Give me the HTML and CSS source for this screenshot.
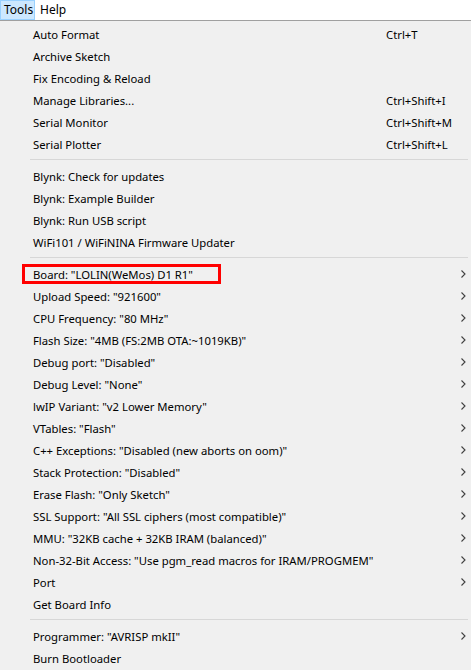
FILE: index.html
```html
<!DOCTYPE html>
<html>
<head>
<meta charset="utf-8">
<link rel="stylesheet" href="styles.css">
</head>
<body>
<div class="menubar">
  <span class="mb-item active">Tools</span>
  <span class="mb-item">Help</span>
</div>
<div class="menu">
  <div class="item"><span class="label">Auto Format</span><span class="key">Ctrl+T</span></div>
  <div class="item"><span class="label">Archive Sketch</span></div>
  <div class="item"><span class="label">Fix Encoding &amp; Reload</span></div>
  <div class="item"><span class="label">Manage Libraries...</span><span class="key">Ctrl+Shift+I</span></div>
  <div class="item"><span class="label">Serial Monitor</span><span class="key">Ctrl+Shift+M</span></div>
  <div class="item"><span class="label">Serial Plotter</span><span class="key">Ctrl+Shift+L</span></div>
  <div class="sep"></div>
  <div class="item"><span class="label">Blynk: Check for updates</span></div>
  <div class="item"><span class="label">Blynk: Example Builder</span></div>
  <div class="item"><span class="label">Blynk: Run USB script</span></div>
  <div class="item"><span class="label">WiFi101 / WiFiNINA Firmware Updater</span></div>
  <div class="sep"></div>
  <div class="item sub highlight"><span class="label">Board: "LOLIN(WeMos) D1 R1"</span><svg class="arrow" width="5" height="8" viewBox="0 0 5 8"><path d="M0.5 0.5 L4 4 L0.5 7.5" fill="none" stroke="#404040" stroke-width="1.1"/></svg></div>
  <div class="item sub"><span class="label">Upload Speed: "921600"</span><svg class="arrow" width="5" height="8" viewBox="0 0 5 8"><path d="M0.5 0.5 L4 4 L0.5 7.5" fill="none" stroke="#404040" stroke-width="1.1"/></svg></div>
  <div class="item sub"><span class="label">CPU Frequency: "80 MHz"</span><svg class="arrow" width="5" height="8" viewBox="0 0 5 8"><path d="M0.5 0.5 L4 4 L0.5 7.5" fill="none" stroke="#404040" stroke-width="1.1"/></svg></div>
  <div class="item sub"><span class="label">Flash Size: "4MB (FS:2MB OTA:~1019KB)"</span><svg class="arrow" width="5" height="8" viewBox="0 0 5 8"><path d="M0.5 0.5 L4 4 L0.5 7.5" fill="none" stroke="#404040" stroke-width="1.1"/></svg></div>
  <div class="item sub"><span class="label">Debug port: "Disabled"</span><svg class="arrow" width="5" height="8" viewBox="0 0 5 8"><path d="M0.5 0.5 L4 4 L0.5 7.5" fill="none" stroke="#404040" stroke-width="1.1"/></svg></div>
  <div class="item sub"><span class="label">Debug Level: "None"</span><svg class="arrow" width="5" height="8" viewBox="0 0 5 8"><path d="M0.5 0.5 L4 4 L0.5 7.5" fill="none" stroke="#404040" stroke-width="1.1"/></svg></div>
  <div class="item sub"><span class="label">lwIP Variant: "v2 Lower Memory"</span><svg class="arrow" width="5" height="8" viewBox="0 0 5 8"><path d="M0.5 0.5 L4 4 L0.5 7.5" fill="none" stroke="#404040" stroke-width="1.1"/></svg></div>
  <div class="item sub"><span class="label">VTables: "Flash"</span><svg class="arrow" width="5" height="8" viewBox="0 0 5 8"><path d="M0.5 0.5 L4 4 L0.5 7.5" fill="none" stroke="#404040" stroke-width="1.1"/></svg></div>
  <div class="item sub"><span class="label">C++ Exceptions: "Disabled (new aborts on oom)"</span><svg class="arrow" width="5" height="8" viewBox="0 0 5 8"><path d="M0.5 0.5 L4 4 L0.5 7.5" fill="none" stroke="#404040" stroke-width="1.1"/></svg></div>
  <div class="item sub"><span class="label">Stack Protection: "Disabled"</span><svg class="arrow" width="5" height="8" viewBox="0 0 5 8"><path d="M0.5 0.5 L4 4 L0.5 7.5" fill="none" stroke="#404040" stroke-width="1.1"/></svg></div>
  <div class="item sub"><span class="label">Erase Flash: "Only Sketch"</span><svg class="arrow" width="5" height="8" viewBox="0 0 5 8"><path d="M0.5 0.5 L4 4 L0.5 7.5" fill="none" stroke="#404040" stroke-width="1.1"/></svg></div>
  <div class="item sub"><span class="label">SSL Support: "All SSL ciphers (most compatible)"</span><svg class="arrow" width="5" height="8" viewBox="0 0 5 8"><path d="M0.5 0.5 L4 4 L0.5 7.5" fill="none" stroke="#404040" stroke-width="1.1"/></svg></div>
  <div class="item sub"><span class="label">MMU: "32KB cache + 32KB IRAM (balanced)"</span><svg class="arrow" width="5" height="8" viewBox="0 0 5 8"><path d="M0.5 0.5 L4 4 L0.5 7.5" fill="none" stroke="#404040" stroke-width="1.1"/></svg></div>
  <div class="item sub"><span class="label">Non-32-Bit Access: "Use pgm_read macros for IRAM/PROGMEM"</span><svg class="arrow" width="5" height="8" viewBox="0 0 5 8"><path d="M0.5 0.5 L4 4 L0.5 7.5" fill="none" stroke="#404040" stroke-width="1.1"/></svg></div>
  <div class="item sub"><span class="label">Port</span><svg class="arrow" width="5" height="8" viewBox="0 0 5 8"><path d="M0.5 0.5 L4 4 L0.5 7.5" fill="none" stroke="#404040" stroke-width="1.1"/></svg></div>
  <div class="item"><span class="label">Get Board Info</span></div>
  <div class="sep"></div>
  <div class="item sub"><span class="label">Programmer: "AVRISP mkII"</span><svg class="arrow" width="5" height="8" viewBox="0 0 5 8"><path d="M0.5 0.5 L4 4 L0.5 7.5" fill="none" stroke="#404040" stroke-width="1.1"/></svg></div>
  <div class="item"><span class="label">Burn Bootloader</span></div>
</div>
</body>
</html>
```
FILE: styles.css
```css
html, body {
  margin: 0;
  padding: 0;
  background: #f0f0f0;
}
body {
  font-family: "Noto Sans", "Open Sans", sans-serif;
  font-size: 11.3px;
  color: #000;
  width: 471px;
  height: 670px;
  overflow: hidden;
}
.menubar {
  display: flex;
  height: 20px;
  background: #fff;
  border-bottom: 1px solid #a0a0a0;
  box-sizing: content-box;
}
.mb-item {
  display: flex;
  align-items: center;
  padding: 0 4px 0 4px;
  height: 20px;
  box-sizing: border-box;
  border: 1px solid transparent;
  line-height: 1;
  font-size: 12px;
}
.mb-item.active {
  background: #cce8ff;
  border-color: #99d1ff;
  padding: 0 3px;
  width: 35px;
}
.menu {
  padding-top: 2px;
}
.item {
  position: relative;
  display: flex;
  align-items: center;
  height: 22px;
  padding-left: 33px;
  padding-right: 5px;
}
.label {
  width: 353px;
  white-space: nowrap;
}
.key {
  white-space: nowrap;
}
.arrow {
  margin-left: auto;
}
.sep {
  height: 10px;
  display: flex;
  align-items: flex-start;
  margin-left: 30px;
  margin-right: 3px;
}
.sep::before {
  content: "";
  display: block;
  width: 100%;
  height: 1px;
  margin-top: 4px;
  background: #d7d7d7;
}
.highlight::after {
  content: "";
  position: absolute;
  left: 22px;
  top: 1px;
  width: 199px;
  height: 20px;
  box-sizing: border-box;
  border: 3px solid #f00;
}
```
